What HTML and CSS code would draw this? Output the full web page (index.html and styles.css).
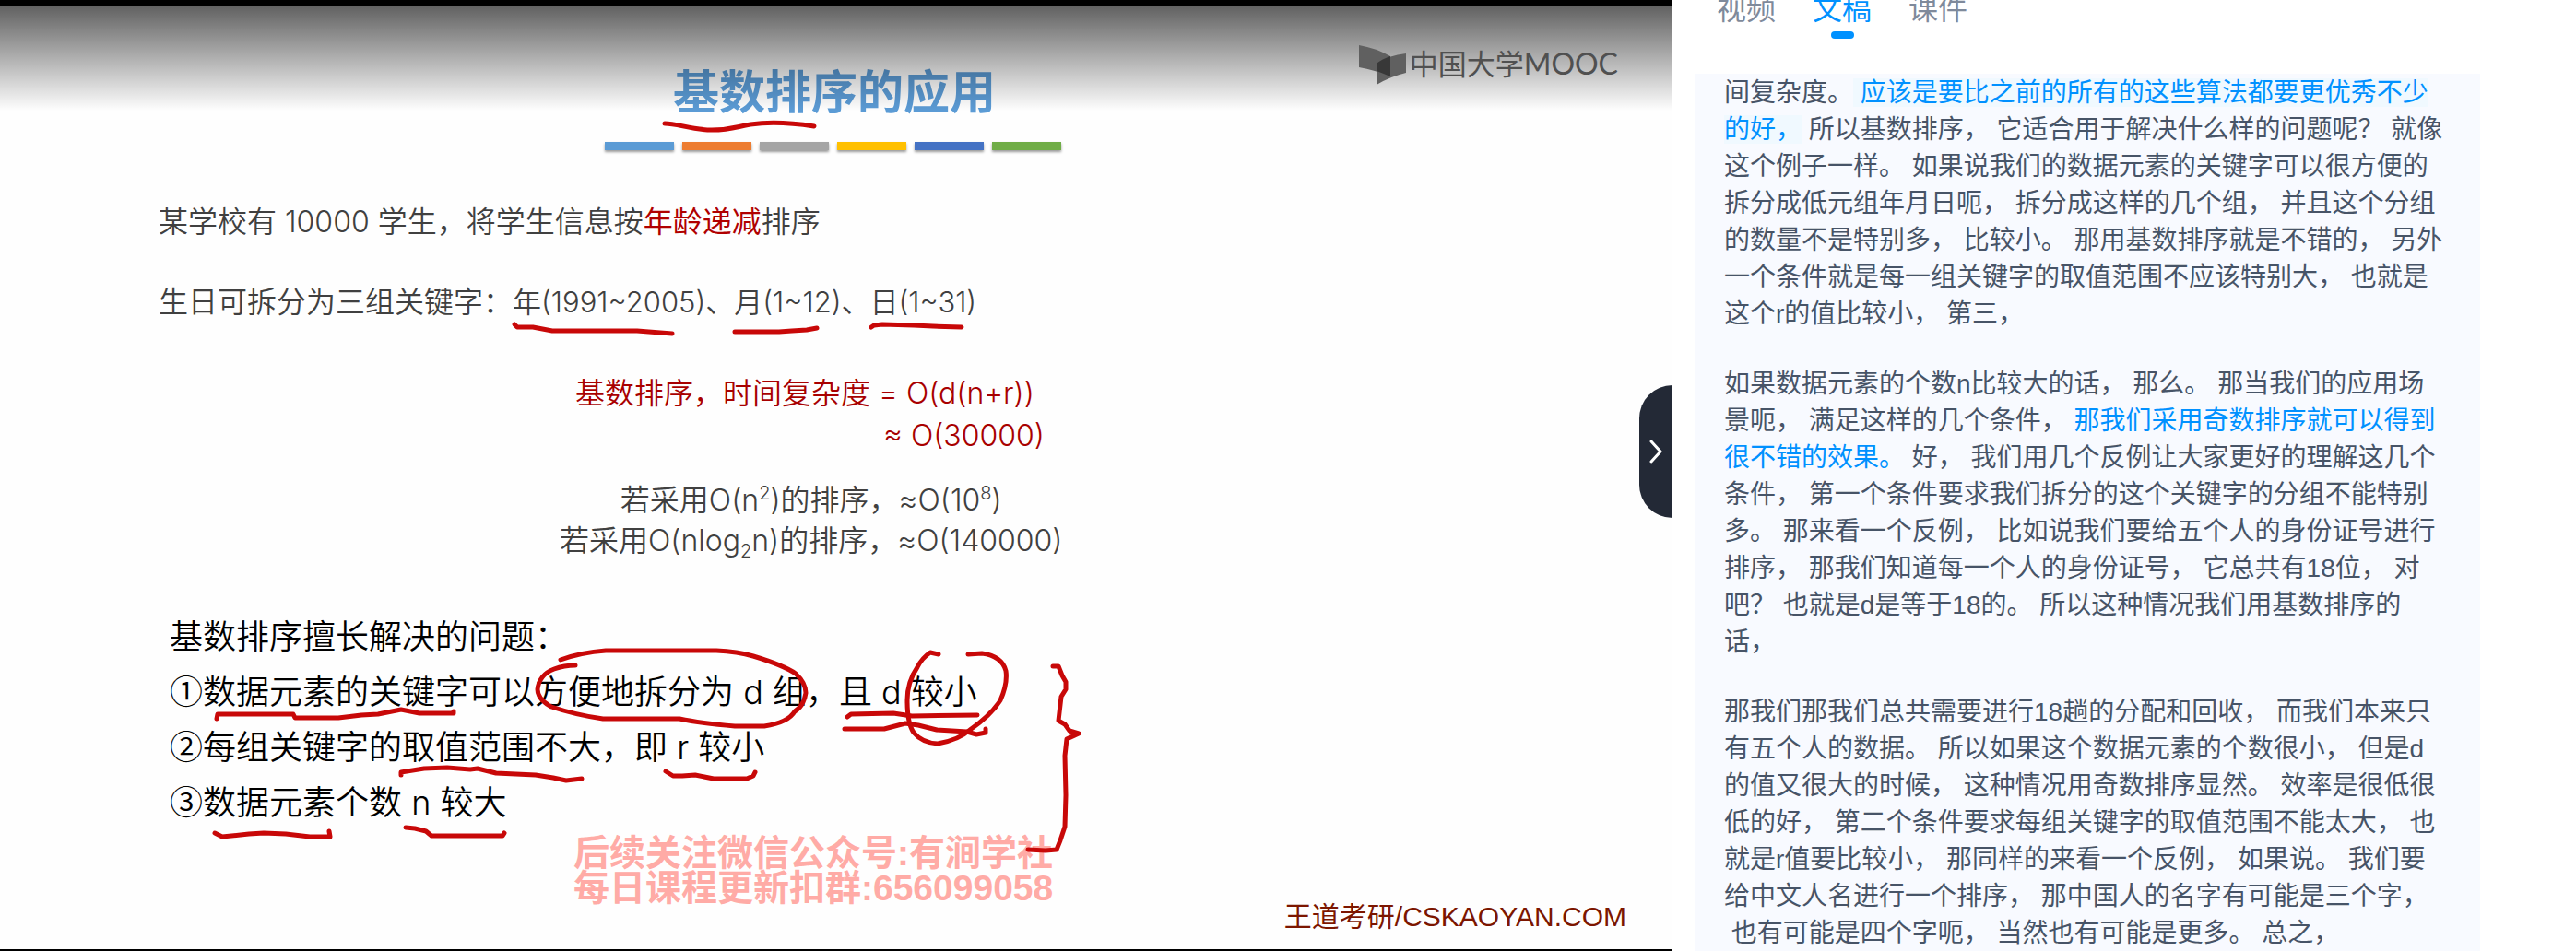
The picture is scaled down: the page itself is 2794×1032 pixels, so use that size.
FILE: index.html
```html
<!DOCTYPE html>
<html lang="zh-CN">
<head>
<meta charset="utf-8">
<title>基数排序的应用</title>
<link rel="stylesheet" href="styles.css">
</head>
<body>
<main class="lesson">
  <section class="video" aria-label="视频">
    <div class="slide">
      <h1 class="slide-title">基数排序的应用</h1>
      <div class="bars">
        <span class="bar sky"></span><span class="bar orange"></span><span class="bar gray"></span><span class="bar yellow"></span><span class="bar blue"></span><span class="bar green"></span>
      </div>
      <div class="facts">
        <p>某学校有 10000 学生，将学生信息按<em>年龄递减</em>排序</p>
        <p>生日可拆分为三组关键字：<span class="num">年(1991~2005)、月(1~12)、日(1~31)</span></p>
      </div>
      <div class="cost">
        <p>基数排序，时间复杂度 = O(d(n+r))</p>
        <p class="approx">≈ O(30000)</p>
      </div>
      <div class="compare">
        <p>若采用O(n<sup>2</sup>)的排序，≈O(10<sup>8</sup>)</p>
        <p>若采用O(nlog<sub>2</sub>n)的排序，≈O(140000)</p>
      </div>
      <div class="uses">
        <p>基数排序擅长解决的问题：</p>
        <p><span class="mark">①</span>数据元素的关键字可以方便地拆分为 d 组，且 d 较小</p>
        <p><span class="mark">②</span>每组关键字的取值范围不大，即 r 较小</p>
        <p><span class="mark">③</span>数据元素个数 n 较大</p>
      </div>
      <div class="watermark">
        <p>后续关注微信公众号:有涧学社</p>
        <p>每日课程更新扣群:656099058</p>
      </div>
      <p class="credit">王道考研/CSKAOYAN.COM</p>
    </div>
    <svg class="ink" viewBox="0 0 1814 1032" preserveAspectRatio="xMinYMin meet" aria-hidden="true">
      <path d="M721 134C735 134 750 141 772 141S800 137 814 135S850 132 883 137"/>
      <path d="M558 352L561 355L578 355L599 359L691 359L729 362"/>
      <path d="M797 360H845L859 359L875 358L886 356"/>
      <path d="M945 355L948 353L957 352L991 353L1012 354L1043 355"/>
      <path d="M235 780L236 775H318L320 779H367L392 776L410 775L435 770L455 774H492V772"/>
      <path d="M608 716Q630 708 657 706H777Q800 707 817 712Q850 722 863 731Q874 741 874 752Q872 766 862 772Q855 784 829 788H797Q760 785 737 780H654Q625 776 598 767Q583 759 583 748Q585 732 601 726Q612 722 624 722"/>
      <path d="M919 778L923 775L969 774L989 777L1060 776"/>
      <path d="M916 791H959L982 785L996 787L1016 792L1049 794L1059 797L1069 795V791"/>
      <path d="M1018 710L1009 708Q1000 714 995 724Q984 740 984 760Q984 785 991 795Q1000 806 1017 807Q1040 803 1052 792Q1075 776 1085 760Q1093 742 1091 728Q1087 712 1065 709L1050 710"/>
      <path d="M1142 723H1148L1152 733L1156 740V748L1151 756L1148 782L1155 786L1160 793L1170 796L1157 802L1155 820L1156 863L1155 897L1150 912L1146 922L1134 923L1115 922"/>
      <path d="M435 841V838L460 834L485 833L510 835L518 834L538 839L581 841L600 844L614 847L631 845"/>
      <path d="M722 837L730 842H740L754 841L774 845H810L817 842L819 838"/>
      <path d="M233 904L241 908L270 905L286 904L310 905L336 908H358L357 902"/>
      <path d="M440 898L450 899L462 902L468 907H545L547 904"/>
    </svg>
    <div class="shade">
      <div class="brand">
        <svg class="brand-mark" viewBox="0 0 52 44" aria-hidden="true">
          <path d="M0 0Q18 3 34 12V34Q17 27 0 24Z" fill="#606060"/>
          <path d="M19 43V20Q32 11 51 9V30Q34 34 19 43Z" fill="#606060"/>
          <path d="M19 28V20Q25 15 34 12V34Q27 31 19 28Z" fill="#383838"/>
        </svg>
        <span class="brand-name">中国大学<span class="mooc">MOOC</span></span>
      </div>
    </div>
    <button class="collapse" type="button" aria-label="收起">
      <svg viewBox="0 0 14 26" aria-hidden="true"><path d="M2 2L12 13L2 24"/></svg>
    </button>
  </section>
  <aside class="side">
    <nav class="tabs">
      <button type="button" class="tab">视频</button>
      <button type="button" class="tab active">文稿</button>
      <button type="button" class="tab">课件</button>
    </nav>
    <article class="transcript">
      <p>间复杂度。<span class="current"> 应该是要比之前的所有的这些算法都要更优秀不少的好，</span> 所以基数排序， 它适合用于解决什么样的问题呢？ 就像这个例子一样。 如果说我们的数据元素的关键字可以很方便的拆分成低元组年月日呃， 拆分成这样的几个组， 并且这个分组的数量不是特别多， 比较小。 那用基数排序就是不错的， 另外一个条件就是每一组关键字的取值范围不应该特别大， 也就是这个r的值比较小， 第三，</p>
      <p>如果数据元素的个数n比较大的话， 那么。 那当我们的应用场景呃， 满足这样的几个条件， <span class="marked">那我们采用奇数排序就可以得到很不错的效果。</span> 好， 我们用几个反例让大家更好的理解这几个条件， 第一个条件要求我们拆分的这个关键字的分组不能特别多。 那来看一个反例， 比如说我们要给五个人的身份证号进行排序， 那我们知道每一个人的身份证号， 它总共有18位， 对吧？ 也就是d是等于18的。 所以这种情况我们用基数排序的话，</p>
      <p>那我们那我们总共需要进行18趟的分配和回收， 而我们本来只有五个人的数据。 所以如果这个数据元素的个数很小， 但是d的值又很大的时候， 这种情况用奇数排序显然。 效率是很低很低的好， 第二个条件要求每组关键字的取值范围不能太大， 也就是r值要比较小， 那同样的来看一个反例， 如果说。 我们要给中文人名进行一个排序， 那中国人的名字有可能是三个字，<wbr>&nbsp;也有可能是四个字呃， 当然也有可能是更多。 总之，</p>
    </article>
  </aside>
</main>
</body>
</html>
```
FILE: styles.css
```css
* {
  box-sizing: border-box;
}

body {
  margin: 0;
  background: #fff;
  font-family: "Liberation Sans", "Noto Sans CJK SC", sans-serif;
}

p,
h1 {
  margin: 0;
}

button {
  border: 0;
  padding: 0;
  background: none;
  font: inherit;
  cursor: pointer;
}

.lesson {
  display: grid;
  grid-template-columns: minmax(0, 1814fr) minmax(0, 980fr);
  height: 100vh;
  overflow: hidden;
}

/* Video */
.video {
  position: relative;
  border-top: 6px solid #000;
  border-bottom: 2px solid #000;
  background: #fefefe;
  overflow: hidden;
}

.slide {
  padding: 58px 50px 0 172px;
  font-family: Inter, "Noto Sans CJK SC", sans-serif;
  font-size: 32px;
  font-weight: 350;
  color: #404040;
  white-space: nowrap;
}

.slide-title {
  margin-left: 558px;
  font-size: 50px;
  line-height: 72px;
  font-weight: 700;
  color: #5b9bd5;
}

.bars {
  display: grid;
  grid-template-columns: repeat(6, 75px);
  gap: 9px;
  margin: 18px 0 0 484px;
}

.bar {
  height: 9px;
  box-shadow: 0 2px 3px rgba(0, 0, 0, 0.4);
}

.sky { background: #5b9bd5; }
.orange { background: #ed7d31; }
.gray { background: #a5a5a5; }
.yellow { background: #ffc000; }
.blue { background: #4472c4; }
.green { background: #70ad47; }

.facts {
  display: grid;
  gap: 39px;
  margin-top: 54px;
  line-height: 48px;
}

.facts em {
  font-style: normal;
  font-weight: 400;
  color: #b00000;
}

.num {
  font-size: 31px;
}

.cost {
  margin: 52px 0 0 452px;
  line-height: 46px;
  color: #a80000;
}

.approx {
  padding-left: 334px;
}

.compare {
  width: fit-content;
  margin: 25px 0 0 435px;
  line-height: 44px;
  text-align: center;
}

.compare sup,
.compare sub {
  font-size: 20px;
  line-height: 1;
}

.uses {
  margin: 52px 0 0 12px;
  font-size: 36px;
  line-height: 60px;
  color: #000;
}

.mark {
  font-family: "Noto Sans CJK SC", sans-serif;
  line-height: 1;
}

.watermark {
  margin: 6px 0 0 450px;
  font-family: "Liberation Sans", "Noto Sans CJK SC", sans-serif;
  font-size: 39px;
  line-height: 38px;
  font-weight: 700;
  color: #ffaba6;
}

.credit {
  font-family: "Liberation Sans", "Noto Sans CJK SC", sans-serif;
  font-size: 30px;
  line-height: 24px;
  font-weight: 400;
  text-align: right;
  color: #7c1600;
}

.ink {
  position: absolute;
  top: -6px;
  left: 0;
  width: 100%;
  fill: none;
  stroke: #c80808;
  stroke-width: 5;
  stroke-linecap: round;
  stroke-linejoin: round;
}

.shade {
  position: absolute;
  inset: 0 0 auto;
  display: flex;
  justify-content: flex-end;
  height: 114px;
  padding: 43px 59px 0 0;
  background: linear-gradient(rgba(0, 0, 0, 0.62), rgba(0, 0, 0, 0));
}

.brand {
  display: flex;
  gap: 3px;
  height: 44px;
  color: #505050;
}

.brand-mark {
  width: 52px;
  height: 44px;
}

.brand-name {
  font-size: 31px;
  line-height: 40px;
  white-space: nowrap;
}

.mooc {
  font-family: Lato, sans-serif;
  font-size: 32px;
}

.collapse {
  position: absolute;
  top: 412px;
  right: 0;
  display: grid;
  place-items: center;
  width: 36px;
  height: 144px;
  border-radius: 36px 0 0 36px;
  background: #232936;
}

.collapse svg {
  width: 14px;
  height: 26px;
  fill: none;
  stroke: #fff;
  stroke-width: 3;
  stroke-linecap: round;
  stroke-linejoin: round;
}

/* Side panel */
.side {
  display: flex;
  flex-direction: column;
  min-height: 0;
  padding: 0 104px 0 24px;
}

.tabs {
  display: flex;
  flex: none;
  gap: 40px;
  height: 80px;
  padding-left: 24px;
}

.tab {
  display: grid;
  justify-items: center;
  align-content: start;
  margin-top: -14px;
  font-size: 32px;
  line-height: 48px;
  color: #7f8a9b;
}

.active {
  color: #0091ff;
}

.active::after {
  content: "";
  width: 25px;
  height: 8px;
  border-radius: 4px;
  background: #0091ff;
}

.transcript {
  display: grid;
  flex: 1;
  align-content: start;
  gap: 36px;
  min-height: 0;
  padding: 1px 36px 0 32px;
  overflow: hidden;
  background: #f8faff;
  font-size: 28px;
  line-height: 40px;
  color: #475467;
}

.current {
  background: #f0f9ff;
  color: #0091ff;
}

.marked {
  color: #0091ff;
}
```
